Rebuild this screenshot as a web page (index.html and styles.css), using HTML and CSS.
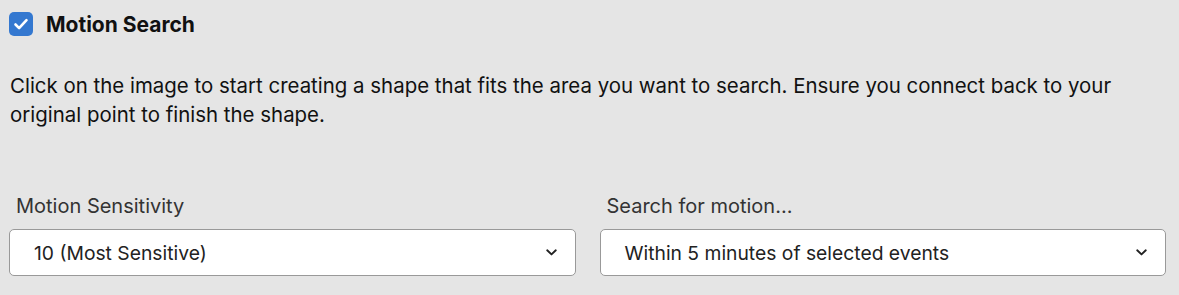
FILE: index.html
```html
<!DOCTYPE html>
<html>
<head>
<meta charset="utf-8">
<link rel="stylesheet" href="styles.css">
</head>
<body>
<div class="panel">
  <label class="check-row">
    <span class="checkbox">
      <svg viewBox="0 0 24 24" width="24" height="24"><path d="M6.5 12.5l3.6 3.6 7.4-8" fill="none" stroke="#fff" stroke-width="2.6" stroke-linecap="round" stroke-linejoin="round"/></svg>
    </span>
    <span class="title">Motion Search</span>
  </label>
  <p class="desc">Click on the image to start creating a shape that fits the area you want to search. Ensure you connect back to your original point to finish the shape.</p>
  <div class="fields">
    <div class="field">
      <div class="label">Motion Sensitivity</div>
      <div class="select">
        <span>10 (Most Sensitive)</span>
        <svg class="chev" viewBox="0 0 11 7" width="11" height="7"><path d="M1.2 1.3L5.5 5.4 9.8 1.3" fill="none" stroke="#222" stroke-width="1.9" stroke-linecap="round" stroke-linejoin="round"/></svg>
      </div>
    </div>
    <div class="field">
      <div class="label">Search for motion...</div>
      <div class="select">
        <span>Within 5 minutes of selected events</span>
        <svg class="chev" viewBox="0 0 11 7" width="11" height="7"><path d="M1.2 1.3L5.5 5.4 9.8 1.3" fill="none" stroke="#222" stroke-width="1.9" stroke-linecap="round" stroke-linejoin="round"/></svg>
      </div>
    </div>
  </div>
</div>
</body>
</html>
```

FILE: styles.css
```css
html, body {
  margin: 0;
  padding: 0;
  background: #e5e5e5;
}
body {
  font-family: Inter, "Liberation Sans", Arial, sans-serif;
  color: #111;
}
.panel {
  padding: 12px 13px 0 9px;
}
.check-row {
  display: flex;
  align-items: center;
  gap: 13px;
  height: 24px;
}
.checkbox {
  width: 24px;
  height: 24px;
  border-radius: 5px;
  background: #3478d0;
  display: flex;
  align-items: center;
  justify-content: center;
}
.title {
  font-weight: 700;
  font-size: 21px;
}
.desc {
  margin: 35px 0 0 1px;
  max-width: 1150px;
  font-size: 20.45px;
  line-height: 29px;
  color: #111;
}
.fields {
  display: grid;
  grid-template-columns: 1fr 1fr;
  gap: 24px;
  margin-top: 66px;
}
.label {
  font-size: 20px;
  color: #333;
  margin-left: 7px;
  line-height: 22px;
}
.select {
  box-sizing: border-box;
  margin-top: 12px;
  height: 47px;
  background: #fff;
  border: 1px solid #999;
  border-radius: 5px;
  display: flex;
  align-items: center;
  justify-content: space-between;
  padding: 0 18px 0 24px;
  font-size: 19.3px;
  color: #222;
}
.chev {
  display: block;
}
```
